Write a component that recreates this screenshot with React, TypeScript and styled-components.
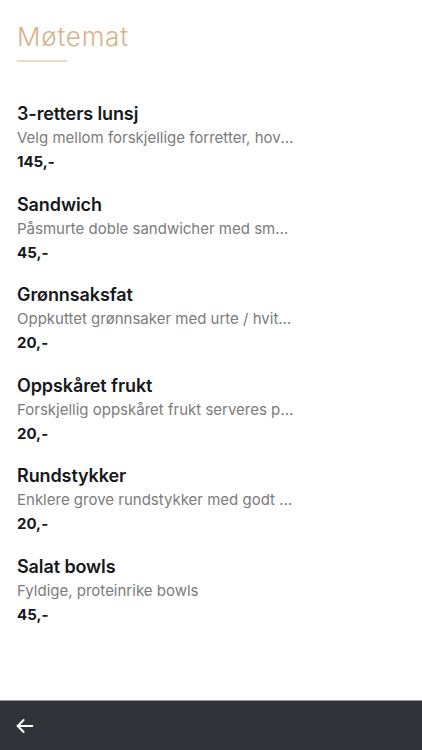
import React from "react";
import styled, { createGlobalStyle } from "styled-components";

const Global = createGlobalStyle`
  html, body { margin: 0; padding: 0; background: #ffffff; }
  body { font-family: Inter, "Open Sans", sans-serif; -webkit-font-smoothing: antialiased; }
  #root { min-height: 100vh; }
`;

const Page = styled.div`
  display: flex;
  flex-direction: column;
  min-height: 100vh;
`;

const Content = styled.main`
  flex: 1;
  padding: 20px 17px 0 17px;
  display: flex;
  flex-direction: column;
`;

const Heading = styled.h1`
  margin: 0;
  font-family: Inter, sans-serif;
  font-weight: 300;
  font-size: 26px;
  line-height: 34px;
  color: #d6b28c;
  letter-spacing: 0.8px;
`;

const Rule = styled.div`
  width: 50px;
  height: 2px;
  background: #eadac8;
  margin-top: 6px;
  margin-bottom: 40px;
`;

const List = styled.ul`
  list-style: none;
  margin: 0;
  padding: 0;
  display: flex;
  flex-direction: column;
  gap: 18.6px;
`;

const Item = styled.li`
  display: flex;
  flex-direction: column;
`;

const ItemTitle = styled.div`
  font-weight: 600;
  font-size: 18px;
  line-height: 24px;
  color: #16181c;
  letter-spacing: -0.1px;
`;

const ItemDesc = styled.div`
  font-size: 15px;
  line-height: 24px;
  font-weight: 400;
  color: #7b7b7b;
  max-width: 277px;
  white-space: nowrap;
  overflow: hidden;
  text-overflow: ellipsis;
`;

const Price = styled.div`
  font-size: 15px;
  line-height: 24px;
  font-weight: 700;
  color: #16181c;
`;

const Footer = styled.footer`
  height: 49px;
  background: #313338;
  border-top: 1px solid #9a9a9a;
  display: flex;
  align-items: center;
  padding: 0 14px;
`;

const BackButton = styled.button`
  background: none;
  border: none;
  padding: 0;
  display: flex;
  align-items: center;
  color: #ffffff;
  cursor: pointer;
`;

const items = [
  { title: "3-retters lunsj", desc: "Velg mellom forskjellige forretter, hovedretter og desserter", price: "145,-" },
  { title: "Sandwich", desc: "Påsmurte doble sandwicher med smakfullt pålegg", price: "45,-" },
  { title: "Grønnsaksfat", desc: "Oppkuttet grønnsaker med urte / hvitløksdip", price: "20,-" },
  { title: "Oppskåret frukt", desc: "Forskjellig oppskåret frukt serveres på fat", price: "20,-" },
  { title: "Rundstykker", desc: "Enklere grove rundstykker med godt pålegg", price: "20,-" },
  { title: "Salat bowls", desc: "Fyldige, proteinrike bowls", price: "45,-" },
];

export default function App() {
  return (
    <Page>
      <Global />
      <Content>
        <Heading>Møtemat</Heading>
        <Rule />
        <List>
          {items.map((it) => (
            <Item key={it.title}>
              <ItemTitle>{it.title}</ItemTitle>
              <ItemDesc>{it.desc}</ItemDesc>
              <Price>{it.price}</Price>
            </Item>
          ))}
        </List>
      </Content>
      <Footer>
        <BackButton aria-label="Tilbake">
          <svg width="22" height="22" viewBox="0 0 24 24" fill="none" stroke="currentColor" strokeWidth="2.2" strokeLinecap="round" strokeLinejoin="round">
            <path d="M20 12H4" />
            <path d="M10.5 5.5L4 12l6.5 6.5" />
          </svg>
        </BackButton>
      </Footer>
    </Page>
  );
}
